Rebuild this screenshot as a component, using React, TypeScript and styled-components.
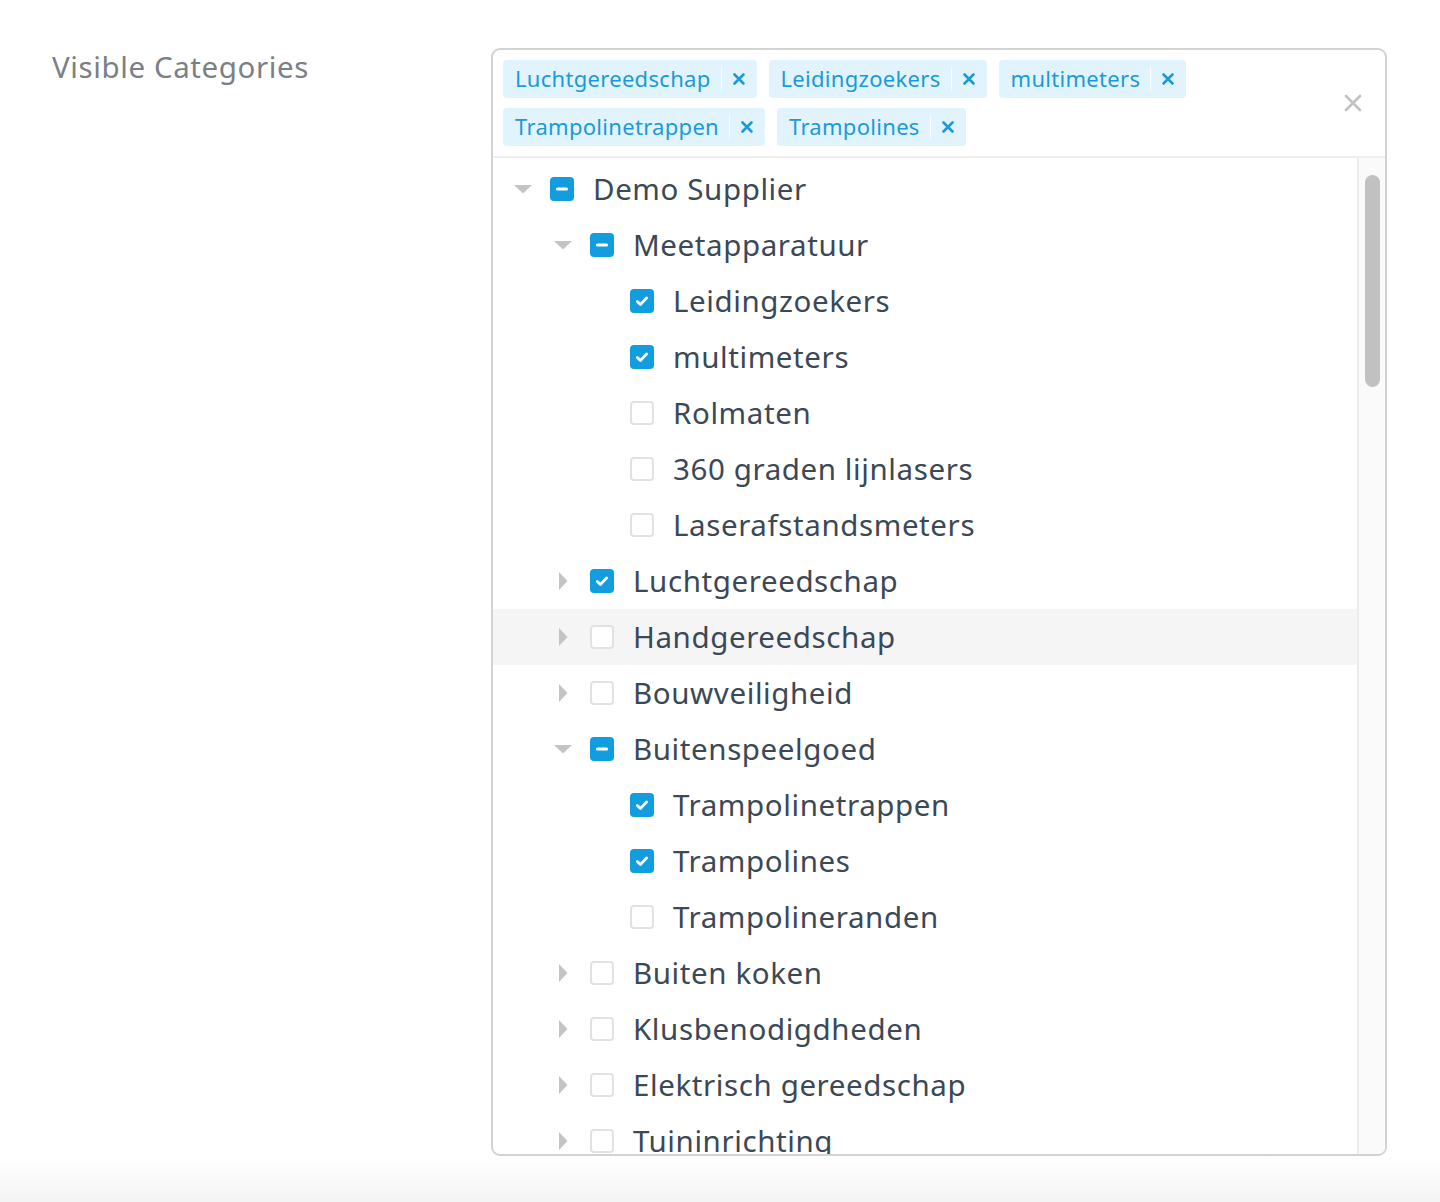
import { FC } from 'react';
import styled, { createGlobalStyle } from 'styled-components';

type Node = {
    label: string;
    level: number;
    state: 'checked' | 'partial' | 'empty';
    toggle?: 'open' | 'closed';
    hover?: boolean;
};

const tags = ['Luchtgereedschap', 'Leidingzoekers', 'multimeters', 'Trampolinetrappen', 'Trampolines'];

const nodes: Node[] = [
    { label: 'Demo Supplier', level: 0, state: 'partial', toggle: 'open' },
    { label: 'Meetapparatuur', level: 1, state: 'partial', toggle: 'open' },
    { label: 'Leidingzoekers', level: 2, state: 'checked' },
    { label: 'multimeters', level: 2, state: 'checked' },
    { label: 'Rolmaten', level: 2, state: 'empty' },
    { label: '360 graden lijnlasers', level: 2, state: 'empty' },
    { label: 'Laserafstandsmeters', level: 2, state: 'empty' },
    { label: 'Luchtgereedschap', level: 1, state: 'checked', toggle: 'closed' },
    { label: 'Handgereedschap', level: 1, state: 'empty', toggle: 'closed', hover: true },
    { label: 'Bouwveiligheid', level: 1, state: 'empty', toggle: 'closed' },
    { label: 'Buitenspeelgoed', level: 1, state: 'partial', toggle: 'open' },
    { label: 'Trampolinetrappen', level: 2, state: 'checked' },
    { label: 'Trampolines', level: 2, state: 'checked' },
    { label: 'Trampolineranden', level: 2, state: 'empty' },
    { label: 'Buiten koken', level: 1, state: 'empty', toggle: 'closed' },
    { label: 'Klusbenodigdheden', level: 1, state: 'empty', toggle: 'closed' },
    { label: 'Elektrisch gereedschap', level: 1, state: 'empty', toggle: 'closed' },
    { label: 'Tuininrichting', level: 1, state: 'empty', toggle: 'closed' },
];

const GlobalStyle = createGlobalStyle`
    html, body {
        margin: 0;
        padding: 0;
        background: #ffffff;
    }
    body {
        font-family: 'Noto Sans', 'Open Sans', sans-serif;
    }
`;

const Page = styled.div`
    height: 1202px;
    display: flex;
    flex-direction: column;
    overflow: hidden;
`;

const Field = styled.div`
    display: grid;
    grid-template-columns: 439px 896px;
    padding: 48px 0 0 52px;
`;

const FieldLabel = styled.div`
    font-size: 29.5px;
    color: #7b8085;
    line-height: 38px;
    letter-spacing: 0.6px;
`;

const Control = styled.div`
    height: 1104px;
    border: 2px solid #d3d3d3;
    border-radius: 9px;
    display: flex;
    flex-direction: column;
    overflow: hidden;
    background: #fff;
`;

const ValueBar = styled.div`
    display: flex;
    align-items: center;
    padding: 10px 0 10px 10px;
    border-bottom: 2px solid #eeeeee;
`;

const Tags = styled.div`
    flex: 1;
    display: flex;
    flex-wrap: wrap;
    gap: 10px 12px;
`;

const Tag = styled.div`
    display: flex;
    align-items: center;
    height: 38px;
    box-sizing: border-box;
    padding: 0 0 3px 12px;
    background: #e1f3fd;
    border-radius: 4px;
    color: #1b9ad9;
    font-size: 22px;
    letter-spacing: 0.3px;
`;

const TagRemove = styled.span`
    display: flex;
    align-items: center;
    height: 24px;
    margin: 3px 0 0 10px;
    padding: 0 11px 0 10px;
    border-left: 1px solid #f8fcff;
`;

const Clear = styled.div`
    width: 60px;
    display: flex;
    justify-content: center;
    padding-right: 2px;
`;

const Menu = styled.div`
    flex: 1;
    display: flex;
    min-height: 0;
`;

const List = styled.div`
    flex: 1;
    padding-top: 3px;
    overflow: hidden;
`;

const Row = styled.div<{ $level: number; $hover?: boolean }>`
    display: flex;
    align-items: center;
    height: 56px;
    padding-left: ${p => 20 + p.$level * 40}px;
    background: ${p => (p.$hover ? '#f5f5f5' : 'transparent')};
    font-size: 29.5px;
    letter-spacing: 0.6px;
    color: #3b4856;
    white-space: nowrap;
`;

const Label = styled.span`
    margin-top: -2px;
`;

const Toggle = styled.span`
    width: 20px;
    display: flex;
    justify-content: center;
    margin-right: 17px;
`;

const Box = styled.span<{ $state: Node['state'] }>`
    width: 24px;
    height: 24px;
    flex-shrink: 0;
    box-sizing: border-box;
    border-radius: 4px;
    margin-right: 19px;
    display: flex;
    align-items: center;
    justify-content: center;
    background: ${p => (p.$state === 'empty' ? '#fff' : '#129ddf')};
    border: ${p => (p.$state === 'empty' ? '2px solid #e2e2e2' : 'none')};
`;

const Track = styled.div`
    width: 28px;
    background: #fafafa;
    border-left: 2px solid #ececec;
    padding: 17px 0 0 6px;
    box-sizing: border-box;
`;

const Thumb = styled.div`
    width: 15px;
    height: 212px;
    border-radius: 8px;
    background: #c1c1c1;
`;

const Footer = styled.div`
    margin-top: auto;
    height: 44px;
    background: linear-gradient(#ffffff, #f4f4f4);
`;

const TreeRow: FC<{ node: Node }> = ({ node }) => (
    <Row $level={node.level} $hover={node.hover}>
        <Toggle>
            {node.toggle === 'open' && (
                <svg width="18" height="10" viewBox="0 0 18 10">
                    <path d="M0 1h18L9 9.5z" fill="#c4c4c4" />
                </svg>
            )}
            {node.toggle === 'closed' && (
                <svg width="10" height="18" viewBox="0 0 10 18">
                    <path d="M1 0v18L9.5 9z" fill="#c4c4c4" />
                </svg>
            )}
        </Toggle>
        <Box $state={node.state}>
            {node.state === 'checked' && (
                <svg width="16" height="16" viewBox="0 0 16 16">
                    <path d="M3.3 8.4l3.1 3.1 6.3-6.6" stroke="#fff" strokeWidth="2.8" fill="none" strokeLinecap="round" strokeLinejoin="round" />
                </svg>
            )}
            {node.state === 'partial' && (
                <svg width="16" height="16" viewBox="0 0 16 16">
                    <path d="M3.5 8h9" stroke="#fff" strokeWidth="3.2" strokeLinecap="round" />
                </svg>
            )}
        </Box>
        <Label>{node.label}</Label>
    </Row>
);

const App: FC = () => {
    return (
        <Page>
            <GlobalStyle />
            <Field>
                <FieldLabel>Visible Categories</FieldLabel>
                <Control>
                    <ValueBar>
                        <Tags>
                            {tags.map(tag => (
                                <Tag key={tag}>
                                    {tag}
                                    <TagRemove>
                                        <svg width="14" height="14" viewBox="0 0 14 14">
                                            <path d="M2.5 2.5l9 9M11.5 2.5l-9 9" stroke="#1b9ad9" strokeWidth="2.6" strokeLinecap="round" />
                                        </svg>
                                    </TagRemove>
                                </Tag>
                            ))}
                        </Tags>
                        <Clear>
                            <svg width="18" height="18" viewBox="0 0 18 18">
                                <path d="M2 2l14 14M16 2L2 16" stroke="#c2c2c2" strokeWidth="2.6" strokeLinecap="round" />
                            </svg>
                        </Clear>
                    </ValueBar>
                    <Menu>
                        <List>
                            {nodes.map(node => (
                                <TreeRow key={node.label} node={node} />
                            ))}
                        </List>
                        <Track>
                            <Thumb />
                        </Track>
                    </Menu>
                </Control>
            </Field>
            <Footer />
        </Page>
    );
};

export default App;
